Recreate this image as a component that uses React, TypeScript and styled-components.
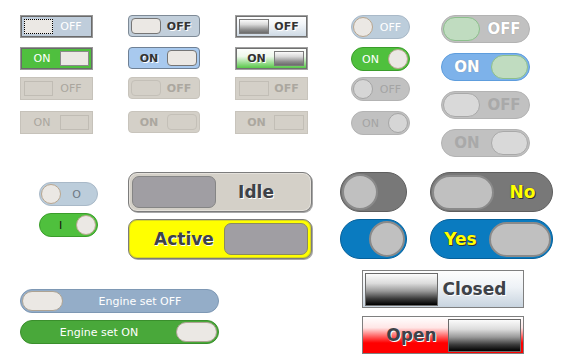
import styled, { createGlobalStyle } from "styled-components";

const GlobalStyle = createGlobalStyle`
  body {
    margin: 0;
    background: #ffffff;
    font-family: "DejaVu Sans", "Liberation Sans", sans-serif;
  }
`;

type SwitchProps = { on?: boolean; disabled?: boolean; label?: string };
type TrackProps = { $on?: boolean; $disabled?: boolean };

// classic square switch (first column)
function ClassicSwitch({ on, disabled, label }: SwitchProps) {
  return (
    <ClassicTrack $on={on} $disabled={disabled}>
      <ClassicThumb $on={on} $disabled={disabled} />
      <ClassicLabel $disabled={disabled}>{label}</ClassicLabel>
    </ClassicTrack>
  );
}

function RoundedSwitch({ on, disabled, label }: SwitchProps) {
  return (
    <RoundedTrack $on={on} $disabled={disabled}>
      <RoundedThumb $disabled={disabled} />
      <BoldSmallLabel $disabled={disabled}>{label}</BoldSmallLabel>
    </RoundedTrack>
  );
}

function BevelSwitch({ on, disabled, label }: SwitchProps) {
  return (
    <BevelTrack $on={on} $disabled={disabled}>
      <BevelThumb $disabled={disabled} />
      <BoldSmallLabel $disabled={disabled}>{label}</BoldSmallLabel>
    </BevelTrack>
  );
}

function PillSwitch({ on, disabled, label }: SwitchProps) {
  return (
    <PillTrack $on={on} $disabled={disabled}>
      <PillThumb $disabled={disabled} />
      <PillLabel $disabled={disabled}>{label}</PillLabel>
    </PillTrack>
  );
}

function BigPillSwitch({ on, disabled, label }: SwitchProps) {
  return (
    <BigPillTrack $on={on} $disabled={disabled}>
      <BigPillThumb $disabled={disabled} />
      <BigPillLabel $disabled={disabled}>{label}</BigPillLabel>
    </BigPillTrack>
  );
}

function DotSwitch({ on }: SwitchProps) {
  return (
    <PillTrack $on={on}>
      <PillThumb />
      <DotLabel $on={on}>{on ? "I" : "O"}</DotLabel>
    </PillTrack>
  );
}

function PlateSwitch({ on, label }: SwitchProps) {
  return (
    <PlateTrack $on={on}>
      <PlateThumb $on={on} />
      <PlateLabel $on={on}>{label}</PlateLabel>
    </PlateTrack>
  );
}

function KnobSwitch({ on }: SwitchProps) {
  return (
    <KnobTrack $on={on}>
      <KnobThumb />
    </KnobTrack>
  );
}

function WordSwitch({ on, label }: SwitchProps) {
  return (
    <WordTrack $on={on}>
      <WordThumb />
      <WordLabel>{label}</WordLabel>
    </WordTrack>
  );
}

function EngineSwitch({ on, label }: SwitchProps) {
  return (
    <EngineTrack $on={on}>
      <EngineThumb />
      <PillLabel>{label}</PillLabel>
    </EngineTrack>
  );
}

function GateSwitch({ on, label }: SwitchProps) {
  return (
    <GateTrack $on={on}>
      <GateThumb />
      <GateLabel $on={on}>{label}</GateLabel>
    </GateTrack>
  );
}

export default function App() {
  return (
    <>
      <GlobalStyle />
      <Page>
        <TopSection>
          <GridColumn $ml={20} $w={73}>
            <ClassicSwitch label="OFF" />
            <ClassicSwitch on label="ON" />
            <ClassicSwitch disabled label="OFF" />
            <ClassicSwitch on disabled label="ON" />
          </GridColumn>
          <GridColumn $ml={35} $w={72}>
            <RoundedSwitch label="OFF" />
            <RoundedSwitch on label="ON" />
            <RoundedSwitch disabled label="OFF" />
            <RoundedSwitch on disabled label="ON" />
          </GridColumn>
          <GridColumn $ml={35} $w={73}>
            <BevelSwitch label="OFF" />
            <BevelSwitch on label="ON" />
            <BevelSwitch disabled label="OFF" />
            <BevelSwitch on disabled label="ON" />
          </GridColumn>
          <GridColumn $ml={43} $w={59}>
            <PillSwitch label="OFF" />
            <PillSwitch on label="ON" />
            <PillSwitch disabled label="OFF" />
            <PillSwitch on disabled label="ON" />
          </GridColumn>
          <StackColumn $ml={31} $w={89} $gap={10} $mt={0}>
            <BigPillSwitch label="OFF" />
            <BigPillSwitch on label="ON" />
            <BigPillSwitch disabled label="OFF" />
            <BigPillSwitch on disabled label="ON" />
          </StackColumn>
        </TopSection>

        <MiddleSection>
          <StackColumn $ml={39} $w={59} $gap={7} $mt={10}>
            <DotSwitch />
            <DotSwitch on />
          </StackColumn>
          <StackColumn $ml={30} $w={184} $gap={7} $mt={0}>
            <PlateSwitch label="Idle" />
            <PlateSwitch on label="Active" />
          </StackColumn>
          <StackColumn $ml={28} $w={67} $gap={7} $mt={0}>
            <KnobSwitch />
            <KnobSwitch on />
          </StackColumn>
          <StackColumn $ml={23} $w={123} $gap={7} $mt={0}>
            <WordSwitch label="No" />
            <WordSwitch on label="Yes" />
          </StackColumn>
        </MiddleSection>

        <BottomSection>
          <StackColumn $ml={20} $w={199} $gap={7} $mt={19}>
            <EngineSwitch label="Engine set OFF" />
            <EngineSwitch on label="Engine set ON" />
          </StackColumn>
          <StackColumn $ml={143} $w={162} $gap={8} $mt={0}>
            <GateSwitch label="Closed" />
            <GateSwitch on label="Open" />
          </StackColumn>
        </BottomSection>
      </Page>
    </>
  );
}

/* ---------- layout ---------- */

const Page = styled.div`
  width: 571px;
  height: 363px;
  overflow: hidden;
  display: flex;
  flex-direction: column;
`;

const TopSection = styled.section`
  display: flex;
  align-items: flex-start;
  padding-top: 15px;
`;

const MiddleSection = styled.section`
  display: flex;
  align-items: flex-start;
  margin-top: 15px;
`;

const BottomSection = styled.section`
  display: flex;
  align-items: flex-start;
  margin-top: 11px;
`;

const GridColumn = styled.div<{ $ml: number; $w: number }>`
  display: grid;
  grid-template-rows: 32px 30px 34px auto;
  margin-left: ${(p) => p.$ml}px;
  width: ${(p) => p.$w}px;
`;

const StackColumn = styled.div<{ $ml: number; $w: number; $gap: number; $mt: number }>`
  display: flex;
  flex-direction: column;
  gap: ${(p) => p.$gap}px;
  margin-left: ${(p) => p.$ml}px;
  margin-top: ${(p) => p.$mt}px;
  width: ${(p) => p.$w}px;
`;

/* ---------- shared parts ---------- */

const TrackBase = styled.div<TrackProps>`
  box-sizing: border-box;
  display: flex;
  flex-direction: ${(p) => (p.$on ? "row-reverse" : "row")};
  align-items: center;
  flex-shrink: 0;
`;

const LabelBase = styled.span`
  flex: 1;
  text-align: center;
  white-space: nowrap;
  line-height: 1;
`;

/* ---------- classic ---------- */

const ClassicTrack = styled(TrackBase)`
  width: 73px;
  height: 23px;
  padding: 3px;
  border: 1px solid ${(p) => (p.$disabled ? "#c6c2ba" : "#979797")};
  box-shadow: ${(p) => (p.$disabled ? "none" : "inset 0 0 0 1px #6a6a6a")};
  background: ${(p) => (p.$disabled ? "#d4d0c8" : p.$on ? "#4fbf3e" : "#bfcddb")};
`;

const ClassicThumb = styled.div<TrackProps>`
  box-sizing: border-box;
  width: 29px;
  height: 15px;
  background: ${(p) => (p.$disabled ? "transparent" : "#ebe8e4")};
  border: 1px ${(p) => (p.$disabled ? "solid #c0bcb4" : p.$on ? "solid #8a8a8a" : "dotted #000")};
`;

const ClassicLabel = styled(LabelBase)<{ $disabled?: boolean }>`
  font-size: 11px;
  color: ${(p) => (p.$disabled ? "#aaa69e" : "#ffffff")};
`;

/* ---------- rounded ---------- */

const RoundedTrack = styled(TrackBase)`
  width: 72px;
  height: 22px;
  padding: 2px;
  border-radius: 4px;
  border: 1px solid ${(p) => (p.$disabled ? "#c8c4bc" : p.$on ? "#6f8094" : "#7e8a96")};
  background: ${(p) => (p.$disabled ? "#d4d0c8" : p.$on ? "#a8c9ee" : "#c2cfdb")};
`;

const RoundedThumb = styled.div<{ $disabled?: boolean }>`
  box-sizing: border-box;
  width: 30px;
  height: 16px;
  border-radius: 4px;
  background: ${(p) => (p.$disabled ? "transparent" : "#ebe8e4")};
  border: 1px solid ${(p) => (p.$disabled ? "#c4c0b8" : "#767676")};
`;

const BoldSmallLabel = styled(LabelBase)<{ $disabled?: boolean }>`
  font-size: 11px;
  font-weight: 700;
  color: ${(p) => (p.$disabled ? "#aba79f" : "#333333")};
  text-shadow: ${(p) => (p.$disabled ? "none" : "1px 1px 0 #ffffff")};
`;

/* ---------- bevel ---------- */

const BevelTrack = styled(TrackBase)`
  width: 73px;
  height: 23px;
  padding: 3px;
  border: 1px solid ${(p) => (p.$disabled ? "#c8c4bc" : "#a0a0a0")};
  box-shadow: ${(p) => (p.$disabled ? "none" : "inset 0 0 0 1px #707070")};
  background: ${(p) =>
    p.$disabled
      ? "#d4d0c8"
      : p.$on
        ? "linear-gradient(#ffffff 0%, #eef8ec 40%, #4cc43c 100%)"
        : "linear-gradient(#ffffff 0%, #f4f7fa 35%, #ccd8e3 100%)"};
`;

const BevelThumb = styled.div<{ $disabled?: boolean }>`
  box-sizing: border-box;
  width: 30px;
  height: 15px;
  background: ${(p) =>
    p.$disabled ? "transparent" : "linear-gradient(#fafafa 0%, #d8d8d8 35%, #8c8c8c 75%, #6c6c6c 100%)"};
  border: 1px solid ${(p) => (p.$disabled ? "#c2beb6" : "#7a7a7a")};
`;

/* ---------- small pill ---------- */

const PillTrack = styled(TrackBase)`
  width: 59px;
  height: 24px;
  padding: 1px;
  border-radius: 12px;
  border: 1px solid ${(p) => (p.$disabled ? "#b3b3b3" : p.$on ? "#3b9d2b" : "#a9b9c8")};
  background: ${(p) => (p.$disabled ? "#c1c1c1" : p.$on ? "#4fc03d" : "#bccddb")};
`;

const PillThumb = styled.div<{ $disabled?: boolean }>`
  box-sizing: border-box;
  width: 20px;
  height: 20px;
  border-radius: 50%;
  background: ${(p) => (p.$disabled ? "#d6d6d6" : "#ebe8e4")};
  border: 1px solid ${(p) => (p.$disabled ? "#a5a5a5" : "#b9a68f")};
`;

const PillLabel = styled(LabelBase)<{ $disabled?: boolean }>`
  font-size: 11px;
  color: ${(p) => (p.$disabled ? "#a4a4a4" : "#ffffff")};
`;

const DotLabel = styled(LabelBase)<{ $on?: boolean }>`
  font-size: 11px;
  color: ${(p) => (p.$on ? "#111111" : "#6f7985")};
  padding-${(p) => (p.$on ? "left" : "right")}: 4px;
`;

/* ---------- big pill ---------- */

const BigPillTrack = styled(TrackBase)`
  width: 89px;
  height: 28px;
  padding: 1px;
  border-radius: 14px;
  border: 1px solid ${(p) => (p.$on && !p.$disabled ? "#5e9ddd" : "#b3b3b3")};
  background: ${(p) => (p.$on && !p.$disabled ? "#7db2ea" : "#c1c1c1")};
`;

const BigPillThumb = styled.div<{ $disabled?: boolean }>`
  box-sizing: border-box;
  width: 37px;
  height: 24px;
  border-radius: 12px;
  background: ${(p) => (p.$disabled ? "#d9d9d9" : "#c0dcc0")};
  border: 1px solid ${(p) => (p.$disabled ? "#a9a9a9" : "#8cbf8c")};
`;

const BigPillLabel = styled(LabelBase)<{ $disabled?: boolean }>`
  font-size: 15px;
  font-weight: 700;
  color: ${(p) => (p.$disabled ? "#a9a9a9" : "#ffffff")};
  text-shadow: ${(p) => (p.$disabled ? "none" : "0 0 1px #8a8a8a")};
`;

/* ---------- plate (Idle / Active) ---------- */

const PlateTrack = styled(TrackBase)`
  width: 184px;
  height: 40px;
  padding: 3px;
  border-radius: 9px;
  border: 1px solid #7c7c7c;
  box-shadow: 1px 1px 0 #a8a8a8, inset 0 0 0 1px ${(p) => (p.$on ? "#d8d820" : "#e4e1db")};
  background: ${(p) => (p.$on ? "#ffff00" : "#d4d0c8")};
`;

const PlateThumb = styled.div<{ $on?: boolean }>`
  box-sizing: border-box;
  width: 84px;
  height: 32px;
  border-radius: 7px;
  background: #a09ea3;
  border: 1px solid ${(p) => (p.$on ? "#8a8a60" : "#858585")};
`;

const PlateLabel = styled(LabelBase)<{ $on?: boolean }>`
  font-size: 17px;
  font-weight: 700;
  color: #3e4248;
  text-shadow: 1px 1px 0 #ffffff;
  padding-${(p) => (p.$on ? "left" : "right")}: 12px;
`;

/* ---------- knob ---------- */

const KnobTrack = styled(TrackBase)`
  width: 67px;
  height: 40px;
  padding: 1px;
  border-radius: 20px;
  border: 1px solid ${(p) => (p.$on ? "#06609a" : "#5e5e5e")};
  background: ${(p) => (p.$on ? "#0a7bc0" : "#787878")};
`;

const KnobThumb = styled.div`
  box-sizing: border-box;
  width: 36px;
  height: 36px;
  border-radius: 50%;
  background: #c0c0c0;
  border: 2px solid #8a8a8a;
`;

/* ---------- word (No / Yes) ---------- */

const WordTrack = styled(KnobTrack)`
  width: 123px;
`;

const WordThumb = styled.div`
  box-sizing: border-box;
  width: 62px;
  height: 35px;
  border-radius: 18px;
  background: #c0c0c0;
  border: 2px solid #8a8a8a;
`;

const WordLabel = styled(LabelBase)`
  font-size: 17px;
  font-weight: 700;
  color: #ffff00;
  text-shadow: 1px 1px 0 #333333, 0 0 1px #333333;
`;

/* ---------- engine ---------- */

const EngineTrack = styled(TrackBase)`
  width: 199px;
  height: 24px;
  padding: 1px;
  border-radius: 12px;
  border: 1px solid ${(p) => (p.$on ? "#3a8f2c" : "#7e98b4")};
  background: ${(p) => (p.$on ? "#49a83a" : "#94adc8")};
`;

const EngineThumb = styled.div`
  box-sizing: border-box;
  width: 41px;
  height: 20px;
  border-radius: 10px;
  background: #ebe8e4;
  border: 1px solid #aea393;
`;

/* ---------- gate (Closed / Open) ---------- */

const GateTrack = styled(TrackBase)`
  width: 162px;
  height: 38px;
  padding: 2px;
  border: 1px solid #7f7f7f;
  background: ${(p) =>
    p.$on
      ? "linear-gradient(#ffffff 0%, #ffe6e6 30%, #ff4a4a 58%, #ff0000 72%, #ff0000 100%)"
      : "linear-gradient(#fdfdfd 0%, #eef2f6 45%, #c8d4df 100%)"};
`;

const GateThumb = styled.div`
  box-sizing: border-box;
  width: 73px;
  height: 33px;
  border: 1px solid #6a6a6a;
  background: linear-gradient(#fbfbfb 0%, #dcdcdc 30%, #9a9a9a 55%, #3a3a3a 80%, #000000 100%);
`;

const GateLabel = styled(LabelBase)<{ $on?: boolean }>`
  font-size: 17px;
  font-weight: 700;
  color: #3e4248;
  text-shadow: 1px 1px 0 #ffffff;
  padding-${(p) => (p.$on ? "left" : "right")}: 10px;
`;
